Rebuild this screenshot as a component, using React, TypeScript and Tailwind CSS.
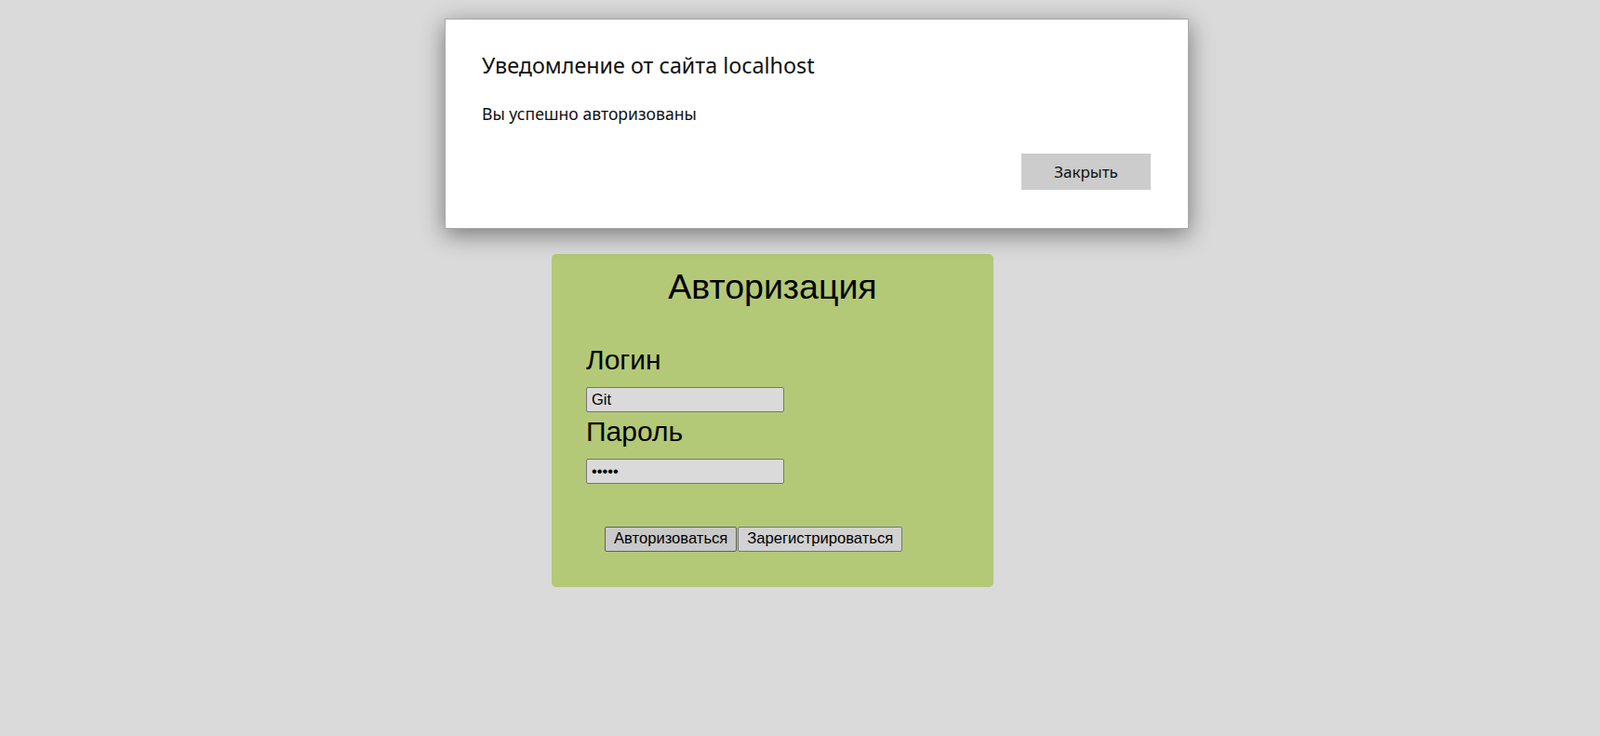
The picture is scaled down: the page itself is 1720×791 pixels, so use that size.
import React from 'react';

const arial = { fontFamily: '"Liberation Sans", Arial, sans-serif' };

function AlertDialog() {
  return (
    <div
      className="absolute left-[478px] top-[20px] w-[800px] h-[226px] bg-white border border-[#a8a8a8] shadow-[0_6px_24px_rgba(0,0,0,0.45)] pl-[39px] pr-[40px] pt-[33px]"
      style={{ fontFamily: '"Noto Sans", "Open Sans", sans-serif' }}
    >
      <div className="text-[23.3px] leading-[32px] text-[#111]">Уведомление от сайта localhost</div>
      <div className="mt-[24px] text-[17.6px] leading-[24px] text-[#111]">Вы успешно авторизованы</div>
      <div className="flex justify-end mt-[31px]">
        <button className="w-[139px] h-[39px] bg-[#cccccc] text-[17px] text-[#111]">Закрыть</button>
      </div>
    </div>
  );
}

function Field({ label, value, type, gap }: { label: string; value: string; type: string; gap: string }) {
  return (
    <div className={gap}>
      <div className="text-[30px] leading-[33px] text-black">{label}</div>
      <input
        readOnly
        type={type}
        value={value}
        className="block mt-[13px] w-[213px] h-[27px] px-[5px] bg-[#dadada] border border-[#767676] rounded-[2px] text-[16.5px] text-black outline-none"
        style={arial}
      />
    </div>
  );
}

export default function App() {
  return (
    <div className="relative min-h-screen bg-[#dadada] pt-[273px]" style={arial}>
      <div className="ml-[593px] w-[475px] h-[358px] rounded-[5px] bg-[#b4c977] pt-[13px]">
        <h1 className="text-[37.5px] leading-[44px] text-black text-center">Авторизация</h1>
        <div className="mt-[40px] pl-[37px] flex flex-col">
          <Field label="Логин" value="Git" type="text" gap="" />
          <Field label="Пароль" value="12345" type="password" gap="mt-[4px]" />
        </div>
        <div className="mt-[46px] pl-[57px] flex">
          <button className="h-[27px] px-[9px] bg-[#c9c9c9] border border-[#5f5f5f] rounded-[2px] text-[16.6px] text-black">
            Авторизоваться
          </button>
          <button className="ml-[1px] h-[27px] px-[9px] bg-[#d2d2d2] border border-[#767676] rounded-[2px] text-[16.6px] text-black">
            Зарегистрироваться
          </button>
        </div>
      </div>
      <AlertDialog />
    </div>
  );
}
